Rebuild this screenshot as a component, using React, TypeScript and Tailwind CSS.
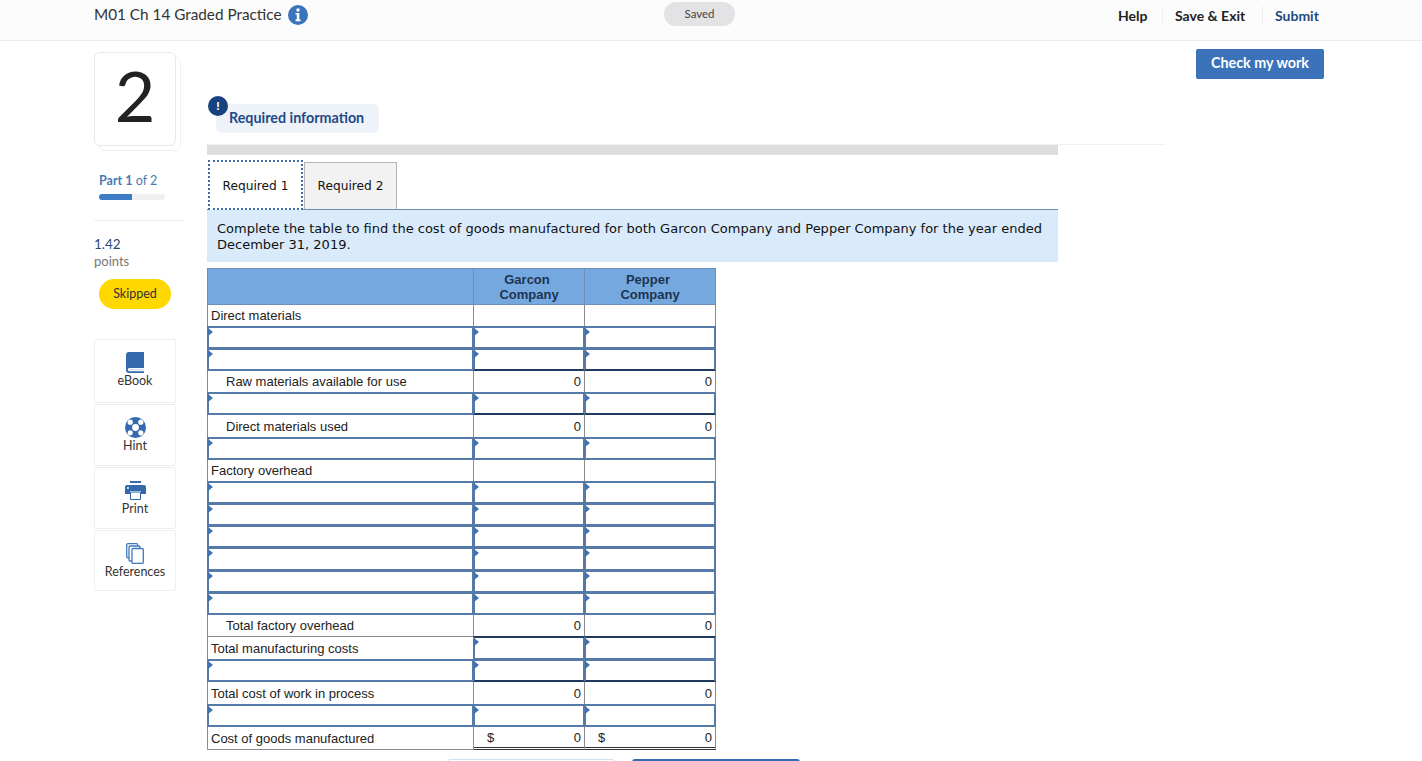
const rows = [
  { kind: "label", label: "Direct materials", h: "h-[22px]" },
  { kind: "input", h: "h-[22px]" },
  { kind: "input", h: "h-[22px]", dark: true },
  { kind: "total", label: "Raw materials available for use", h: "h-[22px]" },
  { kind: "input", h: "h-[22px]", dark: true },
  { kind: "total", label: "Direct materials used", h: "h-[23px]" },
  { kind: "input", h: "h-[22px]" },
  { kind: "label", label: "Factory overhead", h: "h-[22px]" },
  { kind: "input", h: "h-[22px]" },
  { kind: "input", h: "h-[22px]" },
  { kind: "input", h: "h-[22px]" },
  { kind: "input", h: "h-[23px]" },
  { kind: "input", h: "h-[22px]" },
  { kind: "input", h: "h-[22px]" },
  { kind: "total", label: "Total factory overhead", h: "h-[22px]" },
  { kind: "labelInput", label: "Total manufacturing costs", h: "h-[23px]" },
  { kind: "input", h: "h-[22px]", dark: true },
  { kind: "zero", label: "Total cost of work in process", h: "h-[23px]" },
  { kind: "input", h: "h-[22px]" },
  { kind: "grand", label: "Cost of goods manufactured", h: "h-[23px]" },
];

function InputCell({ className, dark }: { className: string; dark?: string }) {
  return (
    <div className={`relative -mt-px h-[calc(100%+1px)] border-2 border-[#557aa8] bg-white ${dark ?? ""} ${className}`}>
      <span className="absolute -left-[1px] top-0 h-0 w-0 border-y-[4px] border-l-[5px] border-y-transparent border-l-[#3f73b0]" />
    </div>
  );
}

function ValueCell({ className, dollar, bottom, nudge }: { className: string; dollar?: boolean; bottom: string; nudge: string }) {
  return (
    <div className={`flex h-full items-center justify-between border-r border-[#8c8c8c] pr-[3px] text-[13px] text-[#222] ${nudge} ${bottom} ${className}`}>
      <span className="pl-[13px]">{dollar ? "$" : ""}</span>
      <span>0</span>
    </div>
  );
}

function DataRow({ row }: { row: (typeof rows)[number] }) {
  const darkBottom = row.dark ? "border-b-[#1f3a5c]" : "";
  if (row.kind === "input") {
    return (
      <div className={`flex ${row.h}`}>
        <InputCell className="w-[267px]" />
        <InputCell className="-ml-px w-[112px]" dark={darkBottom} />
        <InputCell className="-ml-px w-[132px]" dark={darkBottom} />
      </div>
    );
  }
  const indent = row.kind === "total" ? "pl-[18px]" : "pl-[3px]";
  const nudge = row.h === "h-[23px]" ? "pt-px" : "";
  const labelCell = (
    <div className={`flex h-full w-[267px] items-center border-x border-b border-[#8c8c8c] text-[13px] text-[#222] ${indent} ${nudge}`}>
      {row.label}
    </div>
  );
  if (row.kind === "label") {
    return (
      <div className={`flex ${row.h}`}>
        {labelCell}
        <div className="h-full w-[111px] border-r border-b border-[#8c8c8c]" />
        <div className="h-full w-[131px] border-r border-b border-[#8c8c8c]" />
      </div>
    );
  }
  if (row.kind === "labelInput") {
    return (
      <div className={`flex ${row.h}`}>
        {labelCell}
        <InputCell className="-ml-px w-[112px]" dark="border-t-[#1f3a5c]" />
        <InputCell className="-ml-px w-[132px]" dark="border-t-[#1f3a5c]" />
      </div>
    );
  }
  const bottom = row.kind === "grand" ? "border-b-[3px] border-double border-b-[#333]" : "border-b border-b-[#8c8c8c]";
  return (
    <div className={`flex ${row.h}`}>
      {labelCell}
      <ValueCell className="w-[111px]" bottom={bottom} nudge={nudge} dollar={row.kind === "grand"} />
      <ValueCell className="w-[131px]" bottom={bottom} nudge={nudge} dollar={row.kind === "grand"} />
    </div>
  );
}

function ToolCard({ label, h, children }: { label: string; h: string; children: React.ReactNode }) {
  return (
    <div className={`flex w-[82px] flex-col items-center rounded-[2px] border border-[#efefef] pt-[11px] text-[12.5px] text-[#333] ${h}`}>
      <div className="flex h-[22px] items-center justify-center">{children}</div>
      <span className="leading-[16px]">{label}</span>
    </div>
  );
}

export default function App() {
  return (
    <div className="h-screen overflow-hidden bg-white font-['Lato',sans-serif]">
      {/* top bar */}
      <header className="relative flex h-[41px] items-start border-b border-[#ececec] bg-[#fcfcfc] pl-[94px]">
        <div className="flex h-[29px] items-center gap-[7px]">
          <span className="text-[15.3px] text-[#333]">M01 Ch 14 Graded Practice</span>
          <svg width="20" height="20" viewBox="0 0 20 20">
            <circle cx="10" cy="10" r="10" fill="#3b74bb" />
            <circle cx="10" cy="5" r="1.7" fill="#fff" />
            <path d="M7.5 8h3.8v6.6h1.3v1.6H7.5v-1.6h1.3V9.6H7.5z" fill="#fff" />
          </svg>
        </div>
        <div className="absolute left-[664px] top-[2px] flex h-[24px] w-[71px] items-center justify-center rounded-full bg-[#e3e3e6] text-[11.5px] text-[#444]">
          Saved
        </div>
        <nav className="absolute left-[1118px] top-[6px] flex h-[18px] items-center text-[14px] font-bold text-[#222]">
          <span className="w-[44px]">Help</span>
          <span className="h-[18px] border-l border-[#eeeeee]" />
          <span className="w-[99px] pl-[12px]">Save &amp; Exit</span>
          <span className="h-[18px] border-l border-[#eeeeee]" />
          <span className="pl-[12px] text-[#1f4a7d]">Submit</span>
        </nav>
      </header>

      <div className="flex pl-[94px]">
        {/* left column */}
        <aside className="w-[113px] shrink-0 pt-[11px]">
          <div className="relative h-[99px] w-[87px]">
            <div className="absolute bottom-0 right-0 h-[94px] w-[82px] rounded-[6px] border border-[#efefef]" />
            <div className="absolute left-0 top-0 flex h-[94px] w-[82px] items-center justify-center rounded-[6px] border border-[#e9e9e9] bg-white pb-[8px] text-[70px] leading-none text-[#222]">
              2
            </div>
          </div>
          <div className="mt-[22px] pl-[5px] text-[12.5px] leading-[16px] text-[#4a7ab5]">
            <b>Part 1</b> of 2
          </div>
          <div className="ml-[5px] mt-[5px] h-[6px] w-[66px] rounded-full bg-[#f0f0f0]">
            <div className="h-full w-[33px] rounded-l-full bg-[#3b7cc4]" />
          </div>
          <div className="mt-[20px] w-[90px] border-t border-[#eeeeee]" />
          <div className="mt-[15px] text-[13.5px] leading-[17px] text-[#2a4a75]">1.42</div>
          <div className="text-[13px] leading-[17px] text-[#777]">points</div>
          <div className="ml-[5px] mt-[9px] flex h-[30px] w-[72px] items-center justify-center rounded-full bg-[#ffd800] pt-px text-[12.5px] text-[#333]">
            Skipped
          </div>
          <div className="mt-[30px] flex flex-col gap-[1px]">
            <ToolCard label="eBook" h="h-[64px]">
              <svg width="18" height="21" viewBox="0 0 18 21">
                <path d="M3 0h15v16H3.4a1.6 1.6 0 0 0 0 3.2H18V21H3a3 3 0 0 1-3-3V3a3 3 0 0 1 3-3z" fill="#3469ad" />
                <path d="M3.4 17h14.1v1.4H3.4z" fill="#cfe0f2" />
              </svg>
            </ToolCard>
            <ToolCard label="Hint" h="h-[62px]">
              <svg width="21" height="21" viewBox="0 0 21 21">
                <circle cx="10.5" cy="10.5" r="10.5" fill="#3469ad" />
                <circle cx="10.5" cy="10.5" r="3.4" fill="#fff" />
                <circle cx="5.2" cy="5.2" r="2.6" fill="#fff" />
                <circle cx="15.8" cy="5.2" r="2.6" fill="#fff" />
                <circle cx="5.2" cy="15.8" r="2.6" fill="#fff" />
                <circle cx="15.8" cy="15.8" r="2.6" fill="#fff" />
              </svg>
            </ToolCard>
            <ToolCard label="Print" h="h-[62px]">
              <svg width="21" height="19" viewBox="0 0 21 19">
                <path d="M5 0h11v2H5z" fill="#3469ad" />
                <path d="M2 4h17a2 2 0 0 1 2 2v7h-5v-3H5v3H0V6a2 2 0 0 1 2-2z" fill="#3469ad" />
                <path d="M5.5 11h10v7.5h-10z" fill="#fff" stroke="#3469ad" />
                <circle cx="3" cy="7" r="1" fill="#fff" />
              </svg>
            </ToolCard>
            <ToolCard label="References" h="h-[61px]">
              <svg width="18" height="21" viewBox="0 0 18 21" fill="#fff" stroke="#3f78bd" strokeWidth="1.3">
                <rect x="0.7" y="0.7" width="11" height="14" rx="1.2" />
                <rect x="3" y="3" width="11" height="15" rx="1.2" />
                <rect x="6" y="5.5" width="11.3" height="15" rx="1.2" />
              </svg>
            </ToolCard>
          </div>
        </aside>

        {/* question area */}
        <main className="w-[958px] shrink-0">
          <div className="h-[104px] w-full border-b border-[#f0f0f0] pt-[63px]">
            <div className="relative ml-[9px] flex h-[29px] w-[163px] items-end rounded-[6px] bg-[#eef3fa] pb-[5px] pl-[13px] text-[14.3px] font-bold text-[#1f4a87]">
              Required information
              <span className="absolute -left-[8px] -top-[8px] flex h-[20px] w-[20px] items-center justify-center rounded-full bg-[#17427f] text-[12px] font-black text-white">
                !
              </span>
            </div>
          </div>
          <div className="h-[10px] w-[851px] bg-[#dedede]" />
          <div className="w-[851px] font-['DejaVu_Sans',sans-serif] text-[13px] text-[#111]">
            <div className="flex h-[55px] items-end border-b border-[#6d8eb5] pl-[1px]">
              <div className="flex h-[50px] w-[95px] translate-y-[1px] items-center justify-center border-2 border-dotted border-[#3f6ea8] bg-white pt-[3px] text-[12.2px]">
                Required 1
              </div>
              <div className="ml-[1px] flex h-[47px] w-[93px] items-center justify-center border border-b-0 border-[#b5b5b5] bg-[#f2f2f2] pt-[1px] text-[12.2px]">
                Required 2
              </div>
            </div>
            <div className="h-[52px] bg-[#d9ebfa] px-[10px] pt-[11px] leading-[16px]">
              Complete the table to find the cost of goods manufactured for both Garcon Company and Pepper Company for the year ended December 31, 2019.
            </div>
          </div>

          <div className="mt-[6px] w-[509px] font-['Liberation_Sans',sans-serif]">
            <div className="flex h-[37px] border border-[#6c8fb8] bg-[#76a8e0] text-center text-[13px] font-bold leading-[15px] text-[#1d3450]">
              <div className="w-[265px]" />
              <div className="flex w-[111px] items-center justify-center border-l border-[#6c8fb8]">
                <span className="w-[70px]">
                  <span className="pr-[4px]">Garcon</span>
                  <br />
                  Company
                </span>
              </div>
              <div className="flex w-[131px] items-center justify-center border-l border-[#6c8fb8]">
                <span className="w-[70px]">
                  <span className="pr-[4px]">Pepper</span>
                  <br />
                  Company
                </span>
              </div>
            </div>
            {rows.map((row, i) => (
              <DataRow key={i} row={row} />
            ))}
          </div>

          <div className="mt-[9px] flex gap-[17px] pl-[240px]">
            <div className="h-[10px] w-[168px] rounded-[3px] border border-[#cfe0f2] bg-white" />
            <div className="h-[10px] w-[168px] rounded-[3px] bg-[#2f6db5]" />
          </div>
        </main>

        {/* check my work */}
        <div className="ml-[31px] pt-[8px]">
          <div className="flex h-[30px] w-[128px] items-center justify-center rounded-[2px] bg-[#3b72b9] pb-[2px] text-[14.3px] font-bold text-white">
            Check my work
          </div>
        </div>
      </div>
    </div>
  );
}
